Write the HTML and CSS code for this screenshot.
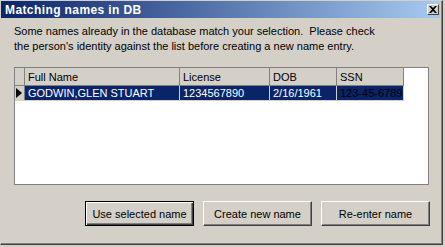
FILE: index.html
```html
<!DOCTYPE html>
<html lang="en">
<head>
    <meta charset="UTF-8">
    <title>Matching names in DB</title>
    <link rel="stylesheet" href="styles.css">
</head>
<body>
    <div class="window">
        <div class="titlebar">
            <span class="title">Matching names in DB</span>
            <span class="close-btn">
                <svg width="8" height="7" viewBox="0 0 8 7">
                    <path d="M0 0h2l2 2 2-2h2L5 3.5 8 7H6L4 5 2 7H0l3-3.5z" fill="#000"/>
                </svg>
            </span>
        </div>
        <div class="content">
            <p class="message">Some names already in the database match your selection.&nbsp; Please check<br>the person's identity against the list before creating a new name entry.</p>
            <div class="grid">
                <table>
                    <tr class="head">
                        <th class="sel"></th>
                        <th class="c-name">Full Name</th>
                        <th class="c-lic">License</th>
                        <th class="c-dob">DOB</th>
                        <th class="c-ssn">SSN</th>
                    </tr>
                    <tr class="row selected">
                        <td class="sel"><span class="arrow"></span></td>
                        <td>GODWIN,GLEN STUART</td>
                        <td>1234567890</td>
                        <td>2/16/1961</td>
                        <td class="dark">123-45-6789</td>
                    </tr>
                </table>
            </div>
            <div class="buttons">
                <button class="btn default">Use selected name</button>
                <button class="btn">Create new name</button>
                <button class="btn">Re-enter name</button>
            </div>
        </div>
    </div>
</body>
</html>
```
FILE: styles.css
```css
body {
    margin: 0;
    background: #d4d0c8;
    font-family: "Liberation Sans", Arial, sans-serif;
    font-size: 11px;
    color: #000;
}
.window {
    width: 441px;
    height: 243px;
    border: 1px solid;
    border-color: #d4d0c8 #404040 #404040 #d4d0c8;
    box-shadow: inset -1px -1px #808080;
    background: #d4d0c8;
}
.titlebar {
    height: 17px;
    margin-right: 2px;
    display: flex;
    align-items: center;
    justify-content: space-between;
    padding: 0 1px 0 4px;
    background: linear-gradient(to right, #0a246a, #a6caf0);
}
.title {
    color: #fff;
    font-weight: bold;
    font-size: 12px;
    letter-spacing: 0.4px;
}
.close-btn {
    width: 10px;
    height: 9px;
    display: flex;
    align-items: center;
    justify-content: center;
    background: #d4d0c8;
    border: 1px solid;
    border-color: #fff #404040 #404040 #fff;
}
.content {
    padding: 6px 12px 0 13px;
}
.message {
    margin: 0;
    line-height: 15px;
}
.grid {
    margin-top: 13px;
    width: 413px;
    height: 116px;
    border: 1px solid #808080;
    background: #fff;
}
table {
    border-collapse: collapse;
    table-layout: fixed;
}
th, td {
    padding: 0 0 0 3px;
    text-align: left;
    font-weight: normal;
    white-space: nowrap;
}
.head th {
    height: 17px;
    background: #d4d0c8;
    border-right: 1px solid #808080;
    border-bottom: 1px solid #808080;
}
.sel {
    width: 9px;
    padding: 0;
}
.c-name { width: 151px; }
.c-lic { width: 86px; }
.c-dob { width: 63px; }
.c-ssn { width: 63px; }
.row td {
    height: 14px;
    border-right: 1px solid #d4d0c8;
    border-bottom: 1px solid #d4d0c8;
}
.selected td {
    background: #0a246a;
    color: #fff;
}
.selected td.sel {
    background: #d4d0c8;
    border-right-color: #808080;
}
.selected td.dark {
    color: #000;
}
.arrow {
    display: block;
    width: 0;
    height: 0;
    margin-left: 1px;
    border-top: 5px solid transparent;
    border-bottom: 5px solid transparent;
    border-left: 6px solid #000;
}
.buttons {
    display: flex;
    justify-content: flex-end;
    gap: 9px;
    margin-top: 16px;
    width: 416px;
}
.btn {
    width: 109px;
    height: 25px;
    padding: 0;
    font-family: "Liberation Sans", Arial, sans-serif;
    font-size: 11px;
    color: #000;
    background: #d4d0c8;
    border: 1px solid;
    border-color: #fff #404040 #404040 #fff;
    box-shadow: inset -1px -1px #808080;
}
.btn.default {
    border: 1px solid #000;
    box-shadow: inset 1px 1px #fff, inset -1px -1px #404040, inset -2px -2px #808080;
}
```
